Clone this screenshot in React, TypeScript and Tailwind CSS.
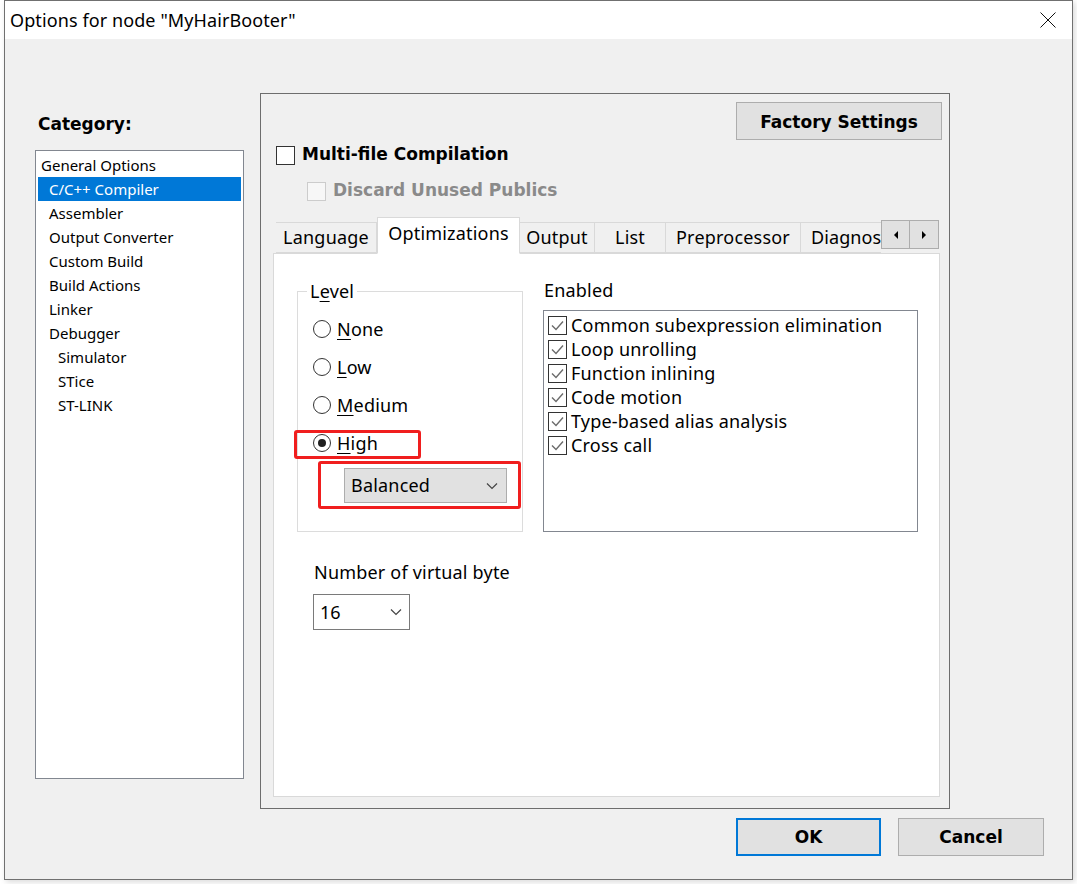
import React from "react";

const ui = "font-['Noto_Sans','Open_Sans',sans-serif]";
const bold = "font-['DejaVu_Sans','Liberation_Sans',sans-serif] font-bold";

const categories: { label: string; indent: number; selected?: boolean }[] = [
	{ label: "General Options", indent: 3 },
	{ label: "C/C++ Compiler", indent: 11, selected: true },
	{ label: "Assembler", indent: 11 },
	{ label: "Output Converter", indent: 11 },
	{ label: "Custom Build", indent: 11 },
	{ label: "Build Actions", indent: 11 },
	{ label: "Linker", indent: 11 },
	{ label: "Debugger", indent: 11 },
	{ label: "Simulator", indent: 20 },
	{ label: "STice", indent: 20 },
	{ label: "ST-LINK", indent: 20 },
];

const enabled = [
	"Common subexpression elimination",
	"Loop unrolling",
	"Function inlining",
	"Code motion",
	"Type-based alias analysis",
	"Cross call",
];

function Chevron() {
	return (
		<svg width="12" height="8" viewBox="0 0 12 8" fill="none">
			<path d="M1 1.5 L6 6.5 L11 1.5" stroke="#444" strokeWidth="1.2" />
		</svg>
	);
}

function CheckBox({ checked, disabled }: { checked?: boolean; disabled?: boolean }) {
	return (
		<span
			className={`flex h-[19px] w-[19px] shrink-0 items-center justify-center border ${
				disabled ? "border-[#cccccc] bg-[#f7f7f7]" : "border-[#333333] bg-white"
			}`}
		>
			{checked && (
				<svg width="15" height="15" viewBox="0 0 15 15" fill="none">
					<path d="M2 7.5 L6 11.5 L13 3.5" stroke="#6b6b6b" strokeWidth="1.4" />
				</svg>
			)}
		</span>
	);
}

function Radio({ label, selected }: { label: string; selected?: boolean }) {
	return (
		<div className="flex h-[38px] items-center pl-[15px]">
			<span className="flex h-[18px] w-[18px] items-center justify-center rounded-full border border-[#333333] bg-white">
				{selected && <span className="h-[8px] w-[8px] rounded-full bg-[#1f1f1f]" />}
			</span>
			<span className="ml-[6px] text-[18px] tracking-[0.2px] text-[#000]">
				<span className="underline underline-offset-[3px]">{label[0]}</span>
				{label.slice(1)}
			</span>
		</div>
	);
}

function Tab({ label, w, active }: { label: string; w: number; active?: boolean }) {
	return (
		<div
			style={{ width: w }}
			className={`flex shrink-0 items-center justify-center border border-[#d9d9d9] text-[18px] tracking-[0.2px] ${
				active
					? "z-10 -mb-px h-[37px] border-b-white bg-white pb-[4px]"
					: "h-[31px] border-l-0 bg-[#f0f0f0]"
			}`}
		>
			{label}
		</div>
	);
}

export default function App() {
	return (
		<div className={`h-[884px] w-[1077px] overflow-hidden bg-white ${ui}`}>
			<div className="ml-[4px] flex h-[880px] w-[1069px] flex-col border border-[#707070] shadow-[2px_2px_6px_rgba(0,0,0,0.15)]">
				{/* title bar */}
				<div className="flex h-[38px] shrink-0 items-center justify-between bg-white pl-[5px] pr-[16px]">
					<span className="text-[18px] tracking-[0.1px] text-black">Options for node "MyHairBooter"</span>
					<svg width="16" height="16" viewBox="0 0 16 16" fill="none">
						<path d="M0.5 0.5 L15.5 15.5 M15.5 0.5 L0.5 15.5" stroke="#111" strokeWidth="1" />
					</svg>
				</div>

				{/* body */}
				<div className="flex flex-1 flex-col bg-[#f0f0f0]">
					<div className="flex items-start pl-[30px] pt-[54px]">
						{/* category column */}
						<div className="flex flex-col pt-[21px]">
							<div className={`ml-[3px] h-[20px] text-[17px] leading-[20px] text-black ${bold}`}>
								Category:
							</div>
							<div className="mt-[16px] h-[629px] w-[209px] border border-[#828790] bg-white px-[2px] pt-[2px]">
								{categories.map((c) => (
									<div
										key={c.label}
										style={{ paddingLeft: c.indent }}
										className={`flex h-[24px] items-center text-[15px] ${
											c.selected ? "bg-[#0078d7] text-white" : "text-black"
										}`}
									>
										{c.label}
									</div>
								))}
							</div>
						</div>

						{/* options panel */}
						<div className="ml-[16px] flex h-[716px] w-[690px] flex-col border border-[#6d6d6d]">
							<div className="flex justify-end pr-[7px] pt-[8px]">
								<button
									className={`flex h-[38px] w-[206px] items-center justify-center border border-[#adadad] bg-[#e1e1e1] pt-[3px] text-[17px] text-black ${bold}`}
								>
									Factory Settings
								</button>
							</div>
							<div className="ml-[15px] mt-[5px] flex h-[20px] items-center">
								<CheckBox />
								<span className={`ml-[7px] text-[17px] text-black ${bold}`}>Multi-file Compilation</span>
							</div>
							<div className="ml-[46px] mt-[16px] flex h-[20px] items-center">
								<CheckBox disabled />
								<span className={`ml-[7px] text-[17px] text-[#8a8a8a] ${bold}`}>Discard Unused Publics</span>
							</div>

							{/* tab control */}
							<div className="ml-[12px] mr-[9px] mt-[16px] flex flex-1 flex-col pb-[11px]">
								<div className="flex h-[36px] items-end pl-[3px] text-black">
									<Tab label="Language" w={101} />
									<Tab label="Optimizations" w={143} active />
									<Tab label="Output" w={75} />
									<Tab label="List" w={71} />
									<Tab label="Preprocessor" w={135} />
									<div className="flex h-[31px] w-[80px] shrink-0 items-center whitespace-nowrap border border-l-0 border-r-0 border-[#d9d9d9] pl-[10px] text-[18px] tracking-[0.1px]">
										Diagnos
									</div>
									<div className="mb-[4px] flex h-[29px] items-stretch">
										<div className="flex w-[29px] items-center justify-center border border-[#adadad] bg-[#e1e1e1]">
											<svg width="6" height="8" viewBox="0 0 6 8">
												<path d="M5 0 L1 4 L5 8 Z" fill="#000" />
											</svg>
										</div>
										<div className="flex w-[29px] items-center justify-center border border-l-0 border-[#adadad] bg-[#e1e1e1]">
											<svg width="6" height="8" viewBox="0 0 6 8">
												<path d="M1 0 L5 4 L1 8 Z" fill="#000" />
											</svg>
										</div>
									</div>
								</div>

								<div className="flex flex-1 flex-col border border-[#d9d9d9] bg-white pl-[23px] pt-[26px]">
									<div className="flex items-start">
										{/* Level group */}
										<div className="relative">
											<fieldset className="h-[252px] w-[226px] border border-[#dcdcdc] px-0 pb-0">
												<legend className="ml-[9px] px-[3px] text-[18px] leading-[22px] tracking-[0.2px] text-black">
													L<span className="underline underline-offset-[3px]">e</span>vel
												</legend>
												<div className="flex flex-col pt-[8px]">
													<Radio label="None" />
													<Radio label="Low" />
													<Radio label="Medium" />
													<Radio label="High" selected />
													<div className="ml-[46px] mt-[6px] flex h-[35px] w-[163px] items-center justify-between border border-[#adadad] bg-[#e1e1e1] pl-[6px] pr-[8px] text-[18px] tracking-[0.2px] text-black">
														<span>Balanced</span>
														<Chevron />
													</div>
												</div>
											</fieldset>
											{/* annotations */}
											<div className="pointer-events-none absolute left-[-3px] top-[150px] h-[29px] w-[127px] rounded-[3px] border-[3px] border-[#f01e1e]" />
											<div className="pointer-events-none absolute left-[21px] top-[181px] h-[48px] w-[203px] rounded-[3px] border-[3px] border-[#f01e1e]" />
										</div>

										{/* Enabled list */}
										<div className="ml-[20px] flex flex-col">
											<div className="h-[20px] pl-[1px] text-[18px] leading-[20px] tracking-[0.2px] text-black">Enabled</div>
											<div className="mt-[10px] h-[222px] w-[375px] border border-[#828790] bg-white pl-[4px] pt-[2px]">
												{enabled.map((e) => (
													<div key={e} className="flex h-[24px] items-center">
														<CheckBox checked />
														<span className="ml-[4px] text-[18px] tracking-[0.2px] text-black">{e}</span>
													</div>
												))}
											</div>
										</div>
									</div>

									<div className="ml-[17px] mt-[30px] h-[20px] text-[18px] leading-[20px] tracking-[0.2px] text-black">
										Number of virtual byte
									</div>
									<div className="ml-[16px] mt-[12px] flex h-[36px] w-[97px] items-center justify-between border border-[#7a7a7a] bg-white pl-[6px] pr-[7px] text-[18px] text-black">
										<span>16</span>
										<Chevron />
									</div>
								</div>
							</div>
						</div>
					</div>

					{/* buttons */}
					<div className="mt-[9px] flex justify-end gap-[17px] pr-[28px]">
						<button
							className={`flex h-[38px] w-[145px] items-center justify-center border-2 border-[#0078d7] bg-[#e1e1e1] pt-[2px] text-[17px] text-black ${bold}`}
						>
							OK
						</button>
						<button
							className={`flex h-[38px] w-[146px] items-center justify-center border border-[#adadad] bg-[#e1e1e1] pt-[2px] text-[17px] text-black ${bold}`}
						>
							Cancel
						</button>
					</div>
				</div>
			</div>
		</div>
	);
}
